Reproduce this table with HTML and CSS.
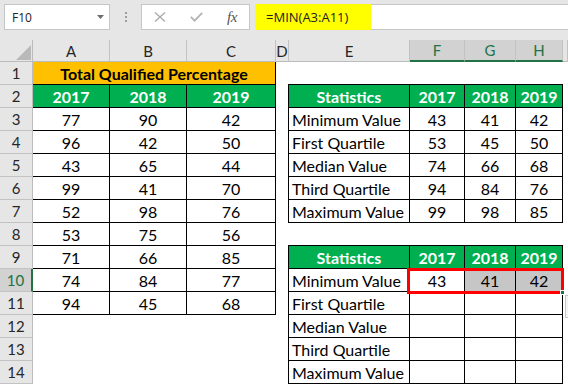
FILE: index.html
```html
<!DOCTYPE html>
<html>
<head>
<meta charset="utf-8">
<link rel="stylesheet" href="styles.css">
</head>
<body>
<div class="app">
  <div class="toolbar">
    <div class="namebox">
      <span class="name">F10</span>
      <svg class="dd" width="7" height="4" viewBox="0 0 7 4"><polygon points="0,0 7,0 3.5,4" fill="#6d6d6d"/></svg>
    </div>
    <div class="grip"><i></i><i></i><i></i></div>
    <div class="fxbox">
      <svg class="ico" width="12" height="10" viewBox="0 0 12 10"><path d="M1 0.5 L11 9.5 M11 0.5 L1 9.5" stroke="#a9a9a9" stroke-width="1.3" fill="none"/></svg>
      <svg class="ico" width="13" height="10" viewBox="0 0 13 10"><path d="M0.8 4.8 L4.6 8.6 L12.2 0.8" stroke="#b4b4b4" stroke-width="1.8" fill="none"/></svg>
      <span class="fx">fx</span>
    </div>
    <div class="formula"><span class="hl">=MIN(A3:A11)</span></div>
  </div>

  <div class="sheet">
    <div class="corner">
      <svg width="15" height="15" viewBox="0 0 15 15"><polygon points="15,0 15,15 0,15" fill="#b9b9b9"/></svg>
    </div>
    <div class="colhdr">
      <div class="ch">A</div>
      <div class="ch">B</div>
      <div class="ch">C</div>
      <div class="ch">D</div>
      <div class="ch">E</div>
      <div class="ch sel">F</div>
      <div class="ch sel">G</div>
      <div class="ch sel">H</div>
      <div class="ch"></div>
    </div>
    <div class="rowhdr">
      <div class="rh">1</div>
      <div class="rh">2</div>
      <div class="rh">3</div>
      <div class="rh">4</div>
      <div class="rh">5</div>
      <div class="rh">6</div>
      <div class="rh">7</div>
      <div class="rh">8</div>
      <div class="rh">9</div>
      <div class="rh sel">10</div>
      <div class="rh">11</div>
      <div class="rh">12</div>
      <div class="rh">13</div>
      <div class="rh">14</div>
    </div>
    <div class="cells">
      <div class="t1">
        <div class="c title">Total Qualified Percentage</div>
        <div class="c hd">2017</div><div class="c hd">2018</div><div class="c hd">2019</div>
        <div class="c">77</div><div class="c">90</div><div class="c">42</div>
        <div class="c">96</div><div class="c">42</div><div class="c">50</div>
        <div class="c">43</div><div class="c">65</div><div class="c">44</div>
        <div class="c">99</div><div class="c">41</div><div class="c">70</div>
        <div class="c">52</div><div class="c">98</div><div class="c">76</div>
        <div class="c">53</div><div class="c">75</div><div class="c">56</div>
        <div class="c">71</div><div class="c">66</div><div class="c">85</div>
        <div class="c">74</div><div class="c">84</div><div class="c">77</div>
        <div class="c">94</div><div class="c">45</div><div class="c">68</div>
      </div>
      <div class="stats t2">
        <div class="c hd">Statistics</div><div class="c hd">2017</div><div class="c hd">2018</div><div class="c hd">2019</div>
        <div class="c l">Minimum Value</div><div class="c">43</div><div class="c">41</div><div class="c">42</div>
        <div class="c l">First Quartile</div><div class="c">53</div><div class="c">45</div><div class="c">50</div>
        <div class="c l">Median Value</div><div class="c">74</div><div class="c">66</div><div class="c">68</div>
        <div class="c l">Third Quartile</div><div class="c">94</div><div class="c">84</div><div class="c">76</div>
        <div class="c l">Maximum Value</div><div class="c">99</div><div class="c">98</div><div class="c">85</div>
      </div>
      <div class="stats t3">
        <div class="c hd">Statistics</div><div class="c hd">2017</div><div class="c hd">2018</div><div class="c hd">2019</div>
        <div class="c l">Minimum Value</div><div class="c">43</div><div class="c g">41</div><div class="c g">42</div>
        <div class="c l">First Quartile</div><div class="c"></div><div class="c"></div><div class="c"></div>
        <div class="c l">Median Value</div><div class="c"></div><div class="c"></div><div class="c"></div>
        <div class="c l">Third Quartile</div><div class="c"></div><div class="c"></div><div class="c"></div>
        <div class="c l">Maximum Value</div><div class="c"></div><div class="c"></div><div class="c"></div>
      </div>
    </div>
  </div>

  <div class="selbox"></div>
  <div class="handle"></div>
  <div class="qa"></div>
</div>
</body>
</html>
```

FILE: styles.css
```css
* { box-sizing: border-box; }
html, body { margin: 0; padding: 0; }
body {
  width: 568px;
  height: 388px;
  overflow: hidden;
  background: #fff;
  font-family: Lato, "Liberation Sans", sans-serif;
  --cols: 77px 77px 89px 13px 121px 55px 51px 47px 1fr;
}
.app { position: relative; width: 568px; height: 388px; overflow: hidden; }

/* formula bar */
.toolbar {
  height: 40px;
  background: #e6e6e6;
  display: flex;
  align-items: flex-start;
  padding: 4px 0 0 4px;
}
.namebox {
  width: 106px;
  height: 26px;
  background: #fff;
  border: 1px solid #c6c6c6;
  display: flex;
  align-items: center;
  justify-content: space-between;
  padding: 0 5px 0 7px;
  font: 12px "Open Sans", sans-serif;
  color: #222;
}
.grip {
  margin: 8px 0 0 15px;
  display: flex;
  flex-direction: column;
  gap: 2px;
}
.grip i { display: block; width: 2px; height: 2px; background: #9c9c9c; }
.fxbox {
  margin-left: 14px;
  width: 109px;
  height: 26px;
  background: #fff;
  border: 1px solid #c6c6c6;
  display: flex;
  align-items: center;
  gap: 24px;
  padding-left: 12px;
}
.fx {
  font: italic 15px "Liberation Serif", serif;
  color: #555;
  letter-spacing: -0.5px;
}
.formula {
  margin-left: 5px;
  flex: 1;
  height: 26px;
  background: #fff;
  border: 1px solid #c6c6c6;
  border-right: 0;
  display: flex;
}
.hl {
  margin: -1px 0 -1px -1px;
  width: 116px;
  background: #ffff00;
  display: flex;
  align-items: center;
  padding-left: 11px;
  font: 13px "Open Sans", sans-serif;
  color: #222;
}

/* sheet */
.sheet {
  display: grid;
  grid-template-columns: 33px 1fr;
  grid-template-rows: 22px auto;
}
.corner {
  background: #e6e6e6;
  border-right: 1px solid #bcbcbc;
  border-bottom: 1px solid #bcbcbc;
  display: flex;
  align-items: flex-end;
  justify-content: flex-end;
  padding: 0 1px 1px 0;
}
.colhdr {
  display: grid;
  grid-template-columns: var(--cols);
}
.ch {
  background: #e6e6e6;
  border-right: 1px solid #c2c2c2;
  border-bottom: 1px solid #bcbcbc;
  display: flex;
  align-items: center;
  justify-content: center;
  font-size: 15px;
  color: #262626;
}
.ch.sel {
  background: #d2d2d2;
  color: #217346;
  border-bottom: 2px solid #217346;
}
.rowhdr {
  display: grid;
  grid-template-rows: repeat(14, 23px);
}
.rh {
  background: #e6e6e6;
  border-right: 1px solid #bcbcbc;
  border-bottom: 1px solid #c2c2c2;
  display: flex;
  align-items: center;
  justify-content: center;
  font-size: 15px;
  color: #262626;
}
.rh.sel {
  background: #d2d2d2;
  color: #217346;
  border-right: 2px solid #217346;
}

.cells {
  display: grid;
  grid-template-columns: var(--cols);
  grid-template-rows: repeat(14, 23px);
}
.t1 {
  grid-column: 1 / 4;
  grid-row: 1 / 12;
  display: grid;
  grid-template-columns: 77px 77px 89px;
  grid-template-rows: repeat(11, 23px);
}
.stats {
  grid-column: 5 / 9;
  margin: -1px 0 0 -1px;
  border-left: 1px solid #000;
  border-top: 1px solid #000;
  display: grid;
  grid-template-columns: 121px 55px 51px 47px;
  grid-template-rows: repeat(6, 23px);
}
.t2 { grid-row: 2 / 8; }
.t3 { grid-row: 9 / 15; }

.c {
  border-right: 1px solid #000;
  border-bottom: 1px solid #000;
  display: flex;
  align-items: center;
  justify-content: center;
  font-size: 16px;
  color: #000;
  white-space: nowrap;
  overflow: hidden;
}
.c.l { justify-content: flex-start; padding-left: 3px; }
.title { grid-column: span 3; background: #ffc000; font-weight: 700; }
.hd { background: #00b050; color: #fff; font-weight: 700; }
.g { background: #c6c6c6; }

/* overlays */
.selbox {
  position: absolute;
  left: 407px;
  top: 268px;
  width: 157px;
  height: 26px;
  border: 3px solid #ff0000;
}
.handle {
  position: absolute;
  left: 560px;
  top: 290px;
  width: 5px;
  height: 5px;
  background: #217346;
  border: 1px solid #fff;
}
.qa {
  position: absolute;
  left: 565px;
  top: 295px;
  width: 12px;
  height: 23px;
  background: #f4f4f4;
  border: 1px solid #c8c8c8;
}
```
